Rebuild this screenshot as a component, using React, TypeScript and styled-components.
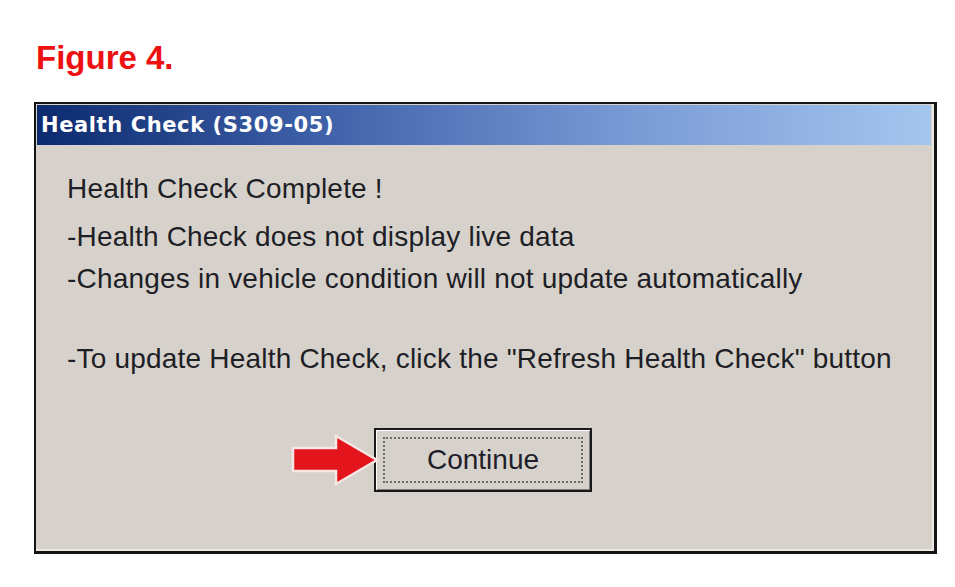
import React from "react";
import styled, { createGlobalStyle } from "styled-components";

const GlobalStyle = createGlobalStyle`
  html, body {
    margin: 0;
    padding: 0;
    background: #ffffff;
  }
  body {
    width: 955px;
    height: 587px;
    overflow: hidden;
    font-family: "Liberation Sans", Arial, sans-serif;
  }
`;

const Page = styled.div`
  display: flex;
  flex-direction: column;
  padding: 38px 0 0 34px;
`;

const Caption = styled.h1`
  margin: 0 0 0 2px;
  font-family: "Liberation Sans", Arial, sans-serif;
  font-size: 33px;
  font-weight: bold;
  line-height: 40px;
  color: #ee1111;
`;

const Dialog = styled.div`
  margin-top: 24px;
  width: 898px;
  height: 447px;
  border: 2px solid #141414;
  border-right-width: 3px;
  border-bottom-width: 3px;
  background: #d6d2cb;
  box-shadow: inset -2px -2px 0 #ece9e2;
  display: flex;
  flex-direction: column;
`;

const TitleBar = styled.div`
  height: 40px;
  margin: 1px 3px 0 1px;
  background: linear-gradient(to right, #0c2a6e 0%, #3c5ea6 30%, #7898d4 65%, #a4c6ee 100%);
  display: flex;
  align-items: center;
  padding-left: 4px;
  color: #ffffff;
  font-family: "DejaVu Sans", Verdana, sans-serif;
  font-weight: bold;
  font-size: 21px;
  letter-spacing: 0.6px;
`;

const Body = styled.div`
  display: flex;
  flex-direction: column;
  padding: 23px 0 0 31px;
  color: #1e1e26;
  font-family: "Liberation Sans", Arial, sans-serif;
  font-size: 28px;
  letter-spacing: 0.2px;
`;

const Line = styled.div<{ $gap?: number }>`
  line-height: 42px;
  margin-bottom: ${(p) => p.$gap ?? 0}px;
  white-space: nowrap;
`;

const ButtonRow = styled.div`
  display: flex;
  align-items: center;
  margin-top: 48px;
  padding-left: 223px;
`;

const Arrow = styled.svg`
  width: 90px;
  height: 52px;
  margin-right: -6px;
  position: relative;
  z-index: 1;
`;

const DialogButton = styled.button`
  width: 218px;
  height: 64px;
  padding: 7px;
  border: 2px solid #1a1a1a;
  background: #d6d2cb;
  box-shadow: inset 1px 1px 0 #ffffff, inset -1px -1px 0 #7e7b76;
  display: flex;
  cursor: pointer;
`;

const ButtonLabel = styled.span`
  flex: 1;
  display: flex;
  align-items: center;
  justify-content: center;
  border: 2px dotted #6e6c68;
  color: #1e1e2a;
  font-family: "Liberation Sans", Arial, sans-serif;
  font-size: 28px;
`;

const App = (): JSX.Element => {
  return (
    <>
      <GlobalStyle />
      <Page>
        <Caption>Figure 4.</Caption>
        <Dialog>
          <TitleBar>Health Check (S309-05)</TitleBar>
          <Body>
            <Line $gap={6}>Health Check Complete !</Line>
            <Line>-Health Check does not display live data</Line>
            <Line $gap={38}>-Changes in vehicle condition will not update automatically</Line>
            <Line>-To update Health Check, click the "Refresh Health Check" button</Line>
            <ButtonRow>
              <Arrow viewBox="0 0 90 52">
                <polygon
                  points="3,14 46,14 46,2 87,26 46,50 46,37 3,37"
                  fill="#e4141c"
                  stroke="#f6e6e4"
                  strokeWidth="2.5"
                  strokeLinejoin="miter"
                />
              </Arrow>
              <DialogButton>
                <ButtonLabel>Continue</ButtonLabel>
              </DialogButton>
            </ButtonRow>
          </Body>
        </Dialog>
      </Page>
    </>
  );
};

export default App;
